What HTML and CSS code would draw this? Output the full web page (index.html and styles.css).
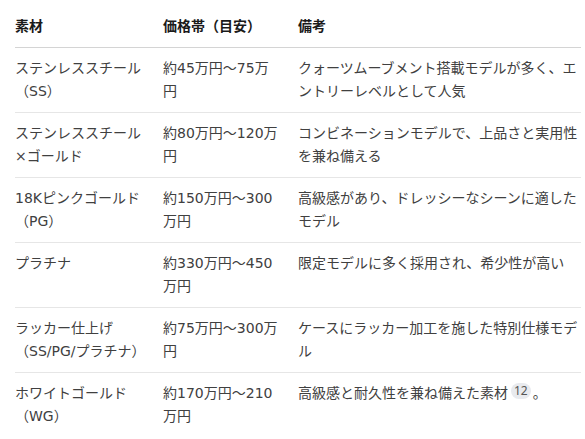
FILE: index.html
```html
<!DOCTYPE html>
<html lang="ja">
<head>
<meta charset="utf-8">
<link rel="stylesheet" href="styles.css">
</head>
<body>
<div class="wrap">
<table class="spec">
<colgroup><col class="c1"><col class="c2"><col class="c3"></colgroup>
<thead>
<tr><th>素材</th><th>価格帯（目安）</th><th>備考</th></tr>
</thead>
<tbody>
<tr><td>ステンレススチール（SS）</td><td>約45万円〜75万円</td><td>クォーツムーブメント搭載モデルが多く、エントリーレベルとして人気</td></tr>
<tr><td>ステンレススチール×ゴールド</td><td>約80万円〜120万円</td><td>コンビネーションモデルで、上品さと実用性を兼ね備える</td></tr>
<tr><td>18Kピンクゴールド（PG）</td><td>約150万円〜300万円</td><td>高級感があり、ドレッシーなシーンに適したモデル</td></tr>
<tr><td>プラチナ</td><td>約330万円〜450万円</td><td>限定モデルに多く採用され、希少性が高い</td></tr>
<tr><td>ラッカー仕上げ（SS/PG/プラチナ）</td><td>約75万円〜300万円</td><td>ケースにラッカー加工を施した特別仕様モデル</td></tr>
<tr><td>ホワイトゴールド（WG）</td><td>約170万円〜210万円</td><td>高級感と耐久性を兼ね備えた素材<span class="ref">12</span>。</td></tr>
</tbody>
</table>
</div>
</body>
</html>
```
FILE: styles.css
```css
html, body {
  margin: 0;
  padding: 0;
  background: #ffffff;
}
.wrap {
  padding: 6px 4px 0 15px;
}
.spec {
  width: 566px;
  table-layout: fixed;
  border-collapse: collapse;
  font-family: "DejaVu Sans", "Noto Sans CJK JP", sans-serif;
  font-size: 14px;
  line-height: 23px;
  color: #404040;
}
.c1 { width: 148px; }
.c2 { width: 135px; }
.c3 { width: 283px; }
.spec th {
  text-align: left;
  font-weight: 700;
  color: #1a1a1a;
  padding: 9px 18px 9px 0;
  border-bottom: 1px solid #d4d4d4;
}
.spec td {
  padding: 9px 18px 9px 0;
  vertical-align: top;
  border-bottom: 1px solid #e6e6e6;
}
.spec th:last-child, .spec td:last-child {
  padding-right: 0;
}
.spec tbody tr:last-child td {
  border-bottom: none;
}
.ref {
  display: inline-block;
  font-family: "Noto Sans", sans-serif;
  font-size: 12px;
  line-height: 16px;
  padding: 0 3px;
  margin: 0 2px 0 3px;
  border-radius: 8px;
  background: #e8eaee;
  color: #555;
  vertical-align: 3px;
}
```
